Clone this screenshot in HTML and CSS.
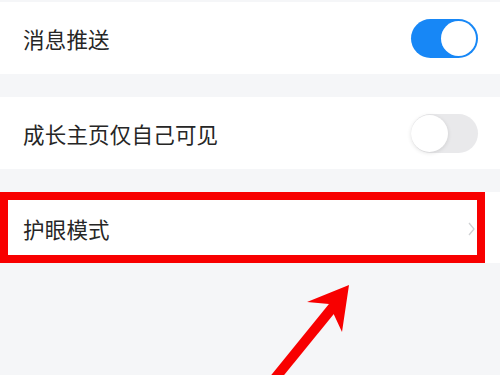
FILE: index.html
```html
<!DOCTYPE html>
<html lang="zh">
<head>
<meta charset="utf-8">
<link rel="stylesheet" href="styles.css">
</head>
<body>
<div class="page">
  <div class="row first">
    <span class="label">消息推送</span>
    <span class="toggle on"><span class="knob"></span></span>
  </div>
  <div class="row">
    <span class="label">成长主页仅自己可见</span>
    <span class="toggle off"><span class="knob"></span></span>
  </div>
  <div class="row nav">
    <span class="label">护眼模式</span>
    <svg class="chev" width="7" height="14" viewBox="0 0 7 14"><path d="M1 1 L6 7 L1 13" fill="none" stroke="#cfd1d4" stroke-width="1.3"/></svg>
  </div>
  <div class="highlight"></div>
  <svg class="arrow" width="500" height="375" viewBox="0 0 500 375">
    <line x1="272" y1="382" x2="333" y2="307" stroke="#f80000" stroke-width="10"/>
    <polygon points="349,285 307,302 329,304 342,332" fill="#f80000"/>
  </svg>
</div>
</body>
</html>
```
FILE: styles.css
```css
html, body {
  margin: 0;
  padding: 0;
}
body {
  background: #f5f6f8;
  font-family: "Noto Sans CJK SC", "Noto Sans", sans-serif;
  width: 500px;
  height: 375px;
  overflow: hidden;
}
.page {
  position: relative;
  width: 500px;
  height: 375px;
  display: flex;
  flex-direction: column;
  gap: 23px;
  padding-top: 2px;
  box-sizing: border-box;
}
.row {
  background: #fff;
  height: 72px;
  display: flex;
  align-items: center;
  justify-content: space-between;
  padding: 0 22px 0 23px;
  box-sizing: border-box;
  flex: none;
}
.row.first {
  height: 72px;
}
.row.nav {
  height: 71px;
  padding-right: 25px;
  padding-top: 2px;
}
.label {
  font-size: 21.5px;
  color: #262626;
  letter-spacing: 0.2px;
}
.toggle {
  position: relative;
  width: 67px;
  height: 39px;
  border-radius: 20px;
  box-sizing: border-box;
  display: block;
}
.toggle.on {
  background: #1787f6;
}
.toggle.on .knob {
  position: absolute;
  right: 2px;
  top: 2px;
  width: 35px;
  height: 35px;
  border-radius: 50%;
  background: #fff;
}
.toggle.off {
  background: #e9e9eb;
}
.toggle.off .knob {
  position: absolute;
  left: 0;
  top: 1px;
  width: 37px;
  height: 37px;
  border-radius: 50%;
  background: #fff;
  box-shadow: 0 1px 4px rgba(0,0,0,0.12);
}
.chev {
  display: block;
}
.highlight {
  position: absolute;
  left: 0;
  top: 192px;
  width: 485px;
  height: 71px;
  border: 8px solid #f80000;
  box-sizing: border-box;
}
.arrow {
  position: absolute;
  left: 0;
  top: 0;
}
```
